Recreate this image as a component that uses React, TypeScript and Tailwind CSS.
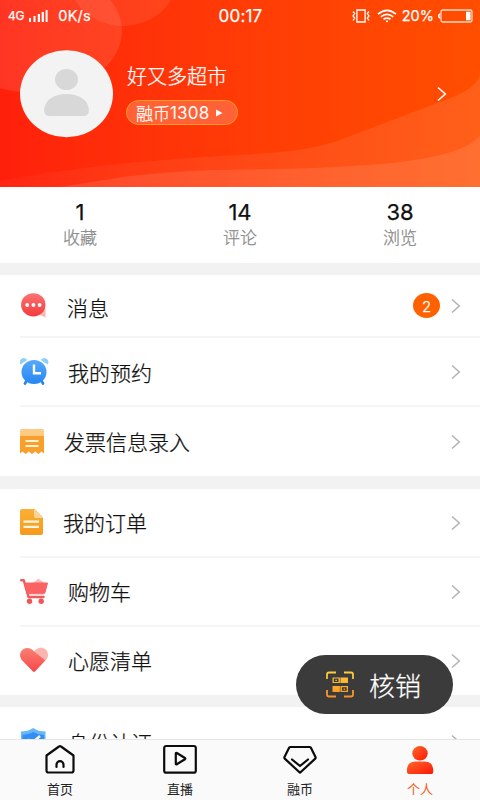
import React from 'react';
import { clsx } from 'clsx';

interface MenuItem {
  label: string;
  icon: React.ReactNode;
  labelClass: string;
  height: string;
  badge?: number;
}

const BubbleIcon = () => (
  <svg width="30" height="30" viewBox="0 0 30 30">
    <defs>
      <linearGradient id="bubble" x1="0" y1="0" x2="0" y2="1">
        <stop offset="0" stopColor="#fb7373" />
        <stop offset="1" stopColor="#f43b3b" />
      </linearGradient>
    </defs>
    <path d="M18 23l7.500 3.500V17z" fill="#fbb5ae" />
    <ellipse cx="13.300" cy="13.800" rx="12.200" ry="11.600" fill="url(#bubble)" />
    <circle cx="7.200" cy="14" r="1.900" fill="#fff" />
    <circle cx="13.400" cy="14" r="1.900" fill="#fff" />
    <circle cx="19.600" cy="14" r="1.900" fill="#fff" />
  </svg>
);

const ClockIcon = () => (
  <svg width="30" height="30" viewBox="0 0 30 30">
    <defs>
      <linearGradient id="clock" x1="0" y1="0" x2="0" y2="1">
        <stop offset="0" stopColor="#57a9fb" />
        <stop offset="1" stopColor="#2585f3" />
      </linearGradient>
    </defs>
    <path d="M.3 7.500a4 4 0 0 1 7-4.500zM27.700 7.500a4 4 0 0 0-7-4.500z" fill="#8dd0fa" />
    <path d="M7 23l-2 3.500M21 23l2 3.500" stroke="#2b86ee" strokeWidth="2.800" strokeLinecap="round" />
    <ellipse cx="14" cy="15" rx="12.500" ry="12" fill="url(#clock)" />
    <path d="M14 7.500v8.800h7" fill="none" stroke="#fff" strokeWidth="2.400" />
  </svg>
);

const ReceiptIcon = () => (
  <svg width="30" height="30" viewBox="0 0 30 30">
    <path d="M0 4a2 2 0 0 1 2-2h20a2 2 0 0 1 2 2v6H0z" fill="#fccb83" />
    <path d="M0 9h24v17.500l-2.500-2-3 2.500-3.200-2.500-3.300 2.500-3.200-2.500-3.300 2.500-3-2.500-2.500 2z" fill="#f9a02c" />
    <path d="M5.500 14h13M5.500 19h13" stroke="#fff1d8" strokeWidth="2" />
  </svg>
);

const OrderIcon = () => (
  <svg width="30" height="30" viewBox="0 0 30 30">
    <defs>
      <linearGradient id="order" x1="0" y1="0" x2="0" y2="1">
        <stop offset="0" stopColor="#f9b135" />
        <stop offset="1" stopColor="#f79a1d" />
      </linearGradient>
    </defs>
    <path d="M2 1h12.500L23 9.500V25a2 2 0 0 1-2 2H2a2 2 0 0 1-2-2V3a2 2 0 0 1 2-2z" fill="url(#order)" />
    <path d="M14 1l9 9h-7a2 2 0 0 1-2-2z" fill="#fbd698" />
    <path d="M3.500 13.700h15.500M3.500 18.800h15.500" stroke="#fff6e2" strokeWidth="2.200" />
  </svg>
);

const CartIcon = () => (
  <svg width="30" height="30" viewBox="0 0 30 30">
    <path d="M14 6l4.500-3.500L23.500 6z" fill="#fbb9b2" stroke="#fbb9b2" strokeWidth="1.500" strokeLinejoin="round" />
    <path d="M1.200 3.300h2.600L8.500 20h15" fill="none" stroke="#f05a5c" strokeWidth="2.400" strokeLinecap="round" strokeLinejoin="round" />
    <path d="M5 6h22.500L25 15.500q-.4 1.300-1.800 1.300H8z" fill="#fa6264" stroke="#fa6264" strokeLinejoin="round" />
    <circle cx="9.500" cy="24.300" r="2.700" fill="#f35459" />
    <circle cx="21.200" cy="24.300" r="2.700" fill="#f35459" />
  </svg>
);

const HeartIcon = () => (
  <svg width="30" height="30" viewBox="0 0 30 30">
    <defs>
      <linearGradient id="heart" x1="0" y1="0" x2="0" y2="1">
        <stop offset="0" stopColor="#fb8070" />
        <stop offset="1" stopColor="#f6484b" />
      </linearGradient>
    </defs>
    <path d="M14 5.500C17 1 22 1 25 3c3.500 2.500 4 7.500 1 11l-2 1z" fill="#fcb5ae" />
    <path d="M2.200 14.500C-1 11-.5 5.500 3.200 3.200c4-2.400 8-1.300 11 2.300L25.300 14.500 15.500 25a2 2 0 0 1-3 0z" fill="url(#heart)" />
  </svg>
);

const ShieldIcon = () => (
  <svg width="30" height="30" viewBox="0 0 30 30">
    <path d="M1 4.500q7 0 12.300-3.500Q18 4.500 25.500 4.500v12q-2 8-12.200 11.500Q3 24 1 16.500z" fill="#65b6fa" />
    <path d="M2.500 8q6 0 10.800-3Q18 8 24 8v8.500q-2 7-10.700 10Q4.500 23 2.500 16.500z" fill="#348ff5" />
    <path d="M8 12.500l4.500 3L20 9" fill="none" stroke="#fff" strokeWidth="2.400" />
  </svg>
);

const ChevronRight = ({ className }: { className?: string }) => (
  <svg width="10" height="16" viewBox="0 0 10 16" fill="none" className={className}>
    <path d="M1 1.500L8.300 8 1 14.500" stroke="currentColor" strokeWidth="1.600" />
  </svg>
);

const groups: MenuItem[][] = [
  [
    { label: '消息', icon: <BubbleIcon />, labelClass: 'pl-[17px] pt-0.5', height: 'h-[63px]', badge: 2 },
    { label: '我的预约', icon: <ClockIcon />, labelClass: 'pl-[18px]', height: 'h-[69px]' },
    { label: '发票信息录入', icon: <ReceiptIcon />, labelClass: 'pl-3.5 pb-0.5', height: 'h-[69px]' },
  ],
  [
    { label: '我的订单', icon: <OrderIcon />, labelClass: 'pl-[13px] pb-0.5', height: 'h-[69px]' },
    { label: '购物车', icon: <CartIcon />, labelClass: 'pl-[18px] pb-0.5', height: 'h-[69px]' },
    { label: '心愿清单', icon: <HeartIcon />, labelClass: 'pl-[18px] pb-0.5', height: 'h-[68px]' },
  ],
  [{ label: '身份认证', icon: <ShieldIcon />, labelClass: 'pl-[18px]', height: 'h-[69px]' }],
];

const stats = [
  { value: 1, label: '收藏' },
  { value: 14, label: '评论' },
  { value: 38, label: '浏览' },
];

const tabs = [
  {
    label: '首页',
    icon: (
      <svg width="34" height="32" viewBox="0 0 34 32" fill="none" stroke="#0c0c0c" strokeWidth="2.200" strokeLinejoin="round" strokeLinecap="round">
        <path d="M3.500 11.500L16 2.500a1.600 1.600 0 0 1 2 0l12.500 9V26.500a2 2 0 0 1-2 2h-23a2 2 0 0 1-2-2z" />
        <path d="M13.500 23v-2.300a3.500 3.500 0 0 1 7 0V23" />
      </svg>
    ),
  },
  {
    label: '直播',
    icon: (
      <svg width="34" height="32" viewBox="0 0 34 32" fill="none" stroke="#0c0c0c" strokeWidth="2.200" strokeLinejoin="round">
        <rect x="1.200" y="2" width="31.600" height="26.700" rx="2" />
        <path d="M12.800 9.500q0-1 1-.5l8.200 5q.7.600 0 1.200l-8.200 5q-1 .5-1-.5z" />
      </svg>
    ),
  },
  {
    label: '融币',
    icon: (
      <svg width="34" height="32" viewBox="0 0 34 32" fill="none" stroke="#0c0c0c" strokeWidth="2.200" strokeLinejoin="round" strokeLinecap="round">
        <path d="M7.500 3h19q1 0 1.400.8L32.500 13q.5 1-.5 1.900L17 28.700 2 14.900q-1-.9-.5-1.900L6.100 3.800Q6.500 3 7.500 3z" />
        <path d="M9 15.500l8 6.500 8-6.500" />
      </svg>
    ),
  },
  {
    label: '个人',
    active: true,
    icon: (
      <svg width="34" height="32" viewBox="0 0 34 32">
        <defs>
          <linearGradient id="person" x1="0" y1="0" x2="1" y2="1">
            <stop offset="0" stopColor="#ff6a2c" />
            <stop offset="1" stopColor="#fc1604" />
          </linearGradient>
        </defs>
        <ellipse cx="17" cy="9.300" rx="7.700" ry="7.200" fill="url(#person)" />
        <path d="M4 28Q3.500 17.500 12 17.500h10q8.500 0 8.300 10.500 0 2-2 2H6q-2 0-2-2z" fill="url(#person)" />
      </svg>
    ),
  },
];

const StatusBar = () => (
  <div className="relative grid h-8 grid-cols-[1fr_auto_1fr] items-center pl-2 pr-[7px] font-['Inter','Noto_Sans_CJK_SC',sans-serif] font-normal text-white">
    <div className="flex items-center">
      <span className="text-[12px] leading-none tracking-[-0.2px]">4G</span>
      <svg width="20" height="14" viewBox="0 0 20 14" fill="#fff" className="ml-[5px]">
        <path d="M0 9h2v4H0zM4.500 7h2v6h-2zM8.800 5h2.200v8H8.800zM12.700 3h2.200v10h-2.200zM16.600 1h2v12h-2z" />
      </svg>
      <span className="ml-[9px] text-[14.500px] leading-none tracking-[0.2px]">0K/s</span>
    </div>
    <span className="text-[17px] leading-none tracking-[0.2px]">00:17</span>
    <div className="flex items-center justify-end">
      <svg width="18" height="14" viewBox="0 0 18 14" fill="none" stroke="#fff" strokeWidth="1.300">
        <path d="M4.900 1h8.200v12H4.900zM1 2.500l1.700 2L1 7l1.700 2L1 11.500M17 2.500l-1.700 2L17 7l-1.700 2 1.700 2.500" />
      </svg>
      <svg width="20" height="14" viewBox="0 0 20 14" fill="none" stroke="#fff" strokeWidth="1.700" className="ml-[7px]">
        <path d="M1 5.200q9-7.800 18 0M3.800 7.900q6.200-5 12.400 0M6.500 10.300q3.500-2.500 7 0" />
        <circle cx="10" cy="12.300" r="1" fill="#fff" stroke="none" />
      </svg>
      <span className="ml-[5px] text-[14.500px] leading-none">20%</span>
      <svg width="35" height="14" viewBox="0 0 35 14" fill="none" className="ml-1">
        <path d="M2.500 5Q.8 5 .8 7t1.700 2" stroke="#fff" strokeWidth="1.500" />
        <rect x="3" y="1" width="31" height="12" rx="1.800" stroke="#ffd6c4" strokeWidth="1.300" />
        <path d="M28 2.700h4.600v8.600H28z" fill="#fff" />
      </svg>
    </div>
  </div>
);

const ProfileHeader = () => (
  <header className="relative h-[187px] shrink-0 overflow-hidden bg-linear-to-r from-[#ff1f0b] to-[#ff4e00]">
    <svg width="480" height="187" viewBox="0 0 480 187" className="absolute inset-0">
      <defs>
        <linearGradient id="wave" x1="0" y1="0" x2="1" y2="0">
          <stop offset="0" stopColor="#fff" stopOpacity=".03" />
          <stop offset="1" stopColor="#fff" stopOpacity=".1" />
        </linearGradient>
      </defs>
      <ellipse cx="34" cy="31" rx="88" ry="62" fill="#fff" opacity=".1" />
      <ellipse cx="123" cy="-22" rx="54" ry="48" fill="#fff" opacity=".08" />
      <path d="M0 181Q100 162 240 155C290 152 315 149 340 140L440 102Q478 89 480 74V187H0z" fill="url(#wave)" />
      <path d="M130 176Q190 169 250 169.500Q350 168 400 162Q465 154 480 136V187H60z" fill="#fff" opacity=".1" />
    </svg>
    <StatusBar />
    <div className="relative flex pl-5 pr-[33px] pt-[18px]">
      <svg width="93" height="88" viewBox="0 0 93 88" className="shrink-0">
        <ellipse cx="46.500" cy="43.800" rx="46.500" ry="43.500" fill="#f3f3f3" />
        <ellipse cx="46.500" cy="29.500" rx="11.500" ry="10.500" fill="#d8d8d8" />
        <path d="M24 60C25 49 35 44 46.500 44S68 49 69 60q0 6-6 6H30q-6 0-6-6z" fill="#d8d8d8" />
      </svg>
      <div className="flex flex-1 flex-col items-start pl-[13px] pt-[13px]">
        <h1 className="pl-px text-[20px] font-light leading-[26px] text-white">好又多超市</h1>
        <div className="mt-[11px] flex h-[25px] w-[112px] items-center rounded-full border border-[#ff9a27] bg-[#ff6236] pl-[9px] text-white">
          <span className="text-[17px] leading-none">融币</span>
          <span className="pt-0.5 font-['Inter'] text-[17px] font-normal leading-none tracking-[0.2px] [-webkit-text-stroke:0]">1308</span>
          <svg width="7" height="8" viewBox="0 0 7 8" className="ml-[7px]">
            <path d="M0 .5L6.500 4 0 7.500z" fill="#fff" />
          </svg>
        </div>
      </div>
      <ChevronRight className="mt-9 text-white" />
    </div>
  </header>
);

const MenuRow = ({ item, last }: { item: MenuItem; last: boolean }) => (
  <li className={clsx('ml-5 flex items-center pr-[19px]', item.height, !last && 'border-b-2 border-[#f5f5f5]')}>
    <span className="w-[30px]">{item.icon}</span>
    <span className={clsx('flex-1 text-[21px] leading-[30px] text-[#111]', item.labelClass)}>{item.label}</span>
    {item.badge && (
      <span className="mr-[11px] flex h-[25px] w-[27px] items-center justify-center rounded-[50%] bg-[#ff6000] pt-0.5 font-['Inter'] text-[15px] leading-none text-white">
        {item.badge}
      </span>
    )}
    <ChevronRight className="text-[#b5b5b5]" />
  </li>
);

const TabBar = () => (
  <nav className="grid h-[61px] shrink-0 grid-cols-4 border-t border-[#e5e5e5] bg-[#fafafa] font-normal [-webkit-text-stroke:0]">
    {tabs.map(tab => (
      <div key={tab.label} className="flex flex-col items-center pt-1">
        {tab.icon}
        <span className={clsx('mt-1 text-[13px] leading-[18px]', tab.active ? 'text-[#f2590f]' : 'text-[#222]')}>{tab.label}</span>
      </div>
    ))}
  </nav>
);

const VerifyButton = () => (
  <button className="absolute left-[296px] top-[655px] flex h-[59px] w-[157px] items-center rounded-full bg-[#3b3b3b] pl-[30px] text-white">
    <svg width="28" height="27" viewBox="0 0 28 27" fill="none">
      <defs>
        <linearGradient id="scan" x1="0" y1="0" x2="0" y2="27" gradientUnits="userSpaceOnUse">
          <stop offset="0" stopColor="#fdd23c" />
          <stop offset="1" stopColor="#f58d24" />
        </linearGradient>
      </defs>
      <path d="M1 8V3.500Q1 1.500 3 1.500h7M18 1.500h7q2 0 2 2V8M27 19v4.500q0 2-2 2h-7M10 25.500H3q-2 0-2-2V19" stroke="url(#scan)" strokeWidth="1.800" />
      <path d="M6.500 6.500h15.500v5.500H6.500zM6.500 15h15.500v6H6.500z" fill="url(#scan)" />
      <path d="M7.800 7.600h4.700v3.500H7.800zM16 16.200h4.700v3.600H16z" fill="#3b3b3b" />
      <path d="M9.400 8.700h1.500v1.300H9.400zM17.600 17.400h1.500v1.300h-1.500z" fill="url(#scan)" />
      <path d="M14.300 6v6M14.300 15v6" stroke="#3b3b3b" strokeWidth=".5" />
    </svg>
    <span className="pl-[15px] text-[26px] leading-[36px]">核销</span>
  </button>
);

export default function App() {
  return (
    <div className="relative flex h-[800px] w-[480px] flex-col overflow-hidden bg-white font-['Noto_Sans_CJK_SC',sans-serif] font-light [-webkit-text-stroke:0.25px]">
      <ProfileHeader />
      <main className="min-h-0 flex-1 overflow-hidden">
        <section className="grid h-[76px] grid-cols-3 pt-[13px]">
          {stats.map(stat => (
            <div key={stat.label} className="flex flex-col items-center">
              <span className="font-['Inter'] text-[22px] font-normal leading-6 text-[#111]">{stat.value}</span>
              <span className="text-[17px] leading-[25px] text-[#888]">{stat.label}</span>
            </div>
          ))}
        </section>
        {groups.map((items, i) => (
          <ul key={i} className={clsx('border-[#f2f2f2]', i === 1 ? 'border-t-[13px]' : 'border-t-[12px]')}>
            {items.map((item, j) => (
              <MenuRow key={item.label} item={item} last={j === items.length - 1} />
            ))}
          </ul>
        ))}
      </main>
      <TabBar />
      <VerifyButton />
    </div>
  );
}
